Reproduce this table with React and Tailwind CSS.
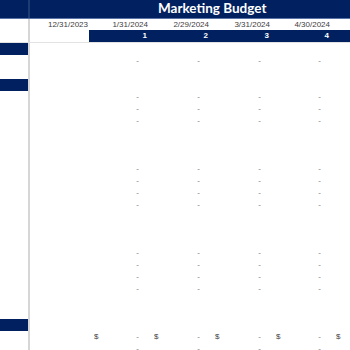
import React from "react";

const NAVY = "bg-[#002060]";

const dates = ["12/31/2023", "1/31/2024", "2/29/2024", "3/31/2024", "4/30/2024"];
const colW = ["w-[59px]", "w-[60px]", "w-[61px]", "w-[61px]", "w-[60px]"];

// one entry per sheet row below the header
const rows = [
  "section", "dash", "", "section", "dash", "dash", "dash", "", "", "",
  "dash", "dash", "dash", "dash", "", "", "",
  "dash", "dash", "dash", "dash", "", "",
  "section", "total", "dash",
];

const Row = ({ kind }) => (
  <div className="flex h-[12px]">
    <div className={`w-[30px] shrink-0 border-r-2 border-[#d6d6d6] ${kind === "section" ? NAVY : ""}`} />
    {colW.map((w, i) => (
      <div key={i} className={`${w} shrink-0 flex items-center justify-between text-[8px] leading-none`}>
        {kind === "total" && i > 0 ? <span className="pl-[5px] text-[#3f3f3f]">$</span> : <span />}
        {(kind === "dash" || kind === "total") && i > 0 ? (
          <span className="pr-[10px] text-[#7a7a7a]">-</span>
        ) : null}
      </div>
    ))}
    {/* partly visible 5th period column */}
    <div className="flex-1 flex items-center text-[8px] leading-none">
      {kind === "total" ? <span className="pl-[5px] text-[#3f3f3f]">$</span> : null}
    </div>
  </div>
);

export default function App() {
  return (
    <div className="w-[350px] h-[350px] overflow-hidden bg-white font-['Liberation_Sans',sans-serif]">
      {/* title bar */}
      <div className="flex h-[19px] border-b border-[#5b74a8]">
        <div className={`w-[30px] shrink-0 border-r-2 border-[#1d3b74] ${NAVY}`} />
        <div className={`flex-1 ${NAVY} flex items-center pl-[128px]`}>
          <span className="font-['Lato',sans-serif] font-bold text-[13.5px] text-white leading-none whitespace-nowrap">
            Marketing Budget
          </span>
        </div>
      </div>

      {/* dates */}
      <div className="flex h-[11px]">
        <div className="w-[30px] shrink-0 border-r-2 border-[#d6d6d6]" />
        {dates.map((d, i) => (
          <div key={d} className={`${colW[i]} shrink-0 text-right pr-[1px] text-[8px] leading-[11px] text-[#404040] whitespace-nowrap`}>
            {d}
          </div>
        ))}
      </div>

      {/* period numbers */}
      <div className="flex h-[13px] border-b border-[#e2e2e2]">
        <div className="w-[30px] shrink-0 border-r-2 border-[#d6d6d6]" />
        <div className={`${colW[0]} shrink-0`} />
        <div className={`flex-1 flex ${NAVY}`}>
          {[1, 2, 3, 4].map((n, i) => (
            <div key={n} className={`${colW[i + 1]} shrink-0 text-right pr-[2px] text-[8px] font-bold leading-[12px] text-white`}>
              {n}
            </div>
          ))}
        </div>
      </div>

      {rows.map((k, i) => (
        <Row key={i} kind={k} />
      ))}
    </div>
  );
}
